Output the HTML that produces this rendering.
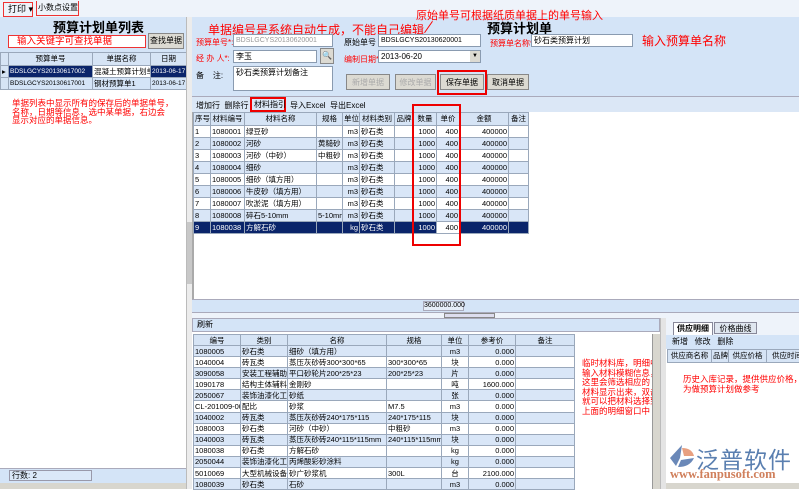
<!DOCTYPE html><html><head><meta charset="utf-8"><style>
*{margin:0;padding:0;box-sizing:border-box}
body{width:799px;height:489px;overflow:hidden;background:#fff;font-family:"Liberation Sans","Noto Sans CJK SC",sans-serif;font-size:9px;color:#000;position:relative}
.a{position:absolute;white-space:nowrap}
.red{color:#f00}
.inp{position:absolute;background:#fff;border:1px solid #8a9bb0;font-size:8px;line-height:11px;padding-left:2px;white-space:nowrap;overflow:hidden}
.btn{position:absolute;background:#dcdad2;border:1px solid #888;font-size:8px;text-align:center;line-height:15px}
table{border-collapse:collapse;position:absolute;table-layout:fixed}
td{border:1px solid #9aa8bb;font-size:7.5px;height:12px;padding:0 1px;white-space:nowrap;overflow:hidden;line-height:10px}
tr.h td{background:#d6e4f5;text-align:center;height:13px}
tr.b td{background:#d9e6f7}
tr.s td{background:#0a246a;color:#fff}
.sm td{height:11.1px;line-height:9px}
.sm tr.h td{height:11px}
.r{text-align:right}.c{text-align:center}
</style></head><body>
<div class="a" style="left:0;top:0;width:799px;height:17px;background:#eef3fa"></div>
<div class="a" style="left:3px;top:2px;width:30px;height:15px;border:1px solid #e33;font-size:9px;line-height:13px;padding-left:4px">打印 ▾</div>
<div class="a" style="left:36px;top:1px;width:43px;height:15px;border:1px solid #e33;border-top:none;font-size:8px;line-height:13px;padding-left:1px">小数点设置</div>
<div class="a" style="left:0;top:17px;width:186px;height:73px;background:#d4e4f7"></div>
<div class="a" style="left:53px;top:17px;font-size:13px;font-weight:bold">预算计划单列表</div>
<div class="inp" style="left:8px;top:35px;width:138px;height:13px;border:1px solid #e33;color:#f00;font-size:9.5px;padding-left:8px">输入关键字可查找单据</div>
<div class="btn" style="left:148px;top:33px;width:36px;height:16px;line-height:14px">查找单据</div>
<table style="left:0;top:52px;width:186px">
<col style="width:8px"><col style="width:84px"><col style="width:58px"><col style="width:36px">
<tr class="h"><td></td><td>预算单号</td><td>单据名称</td><td>日期</td></tr>
<tr class="s"><td style="background:#d6e4f5;color:#000">▸</td><td style="font-size:6.5px">BDSLGCYS20130617002</td><td style="background:#fff;color:#000">混凝土预算计划单</td><td style="font-size:6.5px">2013-06-17</td></tr>
<tr><td style="background:#d6e4f5"></td><td style="font-size:6.5px">BDSLGCYS20130617001</td><td>钢材预算单1</td><td style="font-size:6.5px">2013-06-17</td></tr>
</table>
<div class="a red" style="left:12px;top:99px;font-size:8.5px;line-height:8.5px">单据列表中显示所有的保存后的单据单号，<br>名称，日期等信息，选中某单据，右边会<br>显示对应的单据信息。</div>
<div class="a" style="left:0;top:468px;width:186px;height:15px;background:#d4e4f7;border-top:1px solid #aab"></div>
<div class="a" style="left:9px;top:470px;width:83px;height:11px;background:#dbe8f8;border:1px solid #99a;font-size:8px;line-height:9px;padding-left:2px">行数: 2</div>
<div class="a" style="left:0;top:483px;width:186px;height:6px;background:#d8d6ce"></div>
<div class="a" style="left:186px;top:17px;width:6px;height:472px;background:#ececec;border-left:1px solid #bbb"></div>
<div class="a" style="left:187px;top:222px;width:5px;height:62px;background:#c8c8c8"></div>
<div class="a" style="left:192px;top:17px;width:607px;height:79px;background:#d4e4f7"></div>
<div class="a red" style="left:208px;top:21px;font-size:12px">单据编号是系统自动生成，不能自己编辑</div>
<div class="a red" style="left:416px;top:7px;font-size:11px">原始单号可根据纸质单据上的单号输入</div>
<div class="a" style="left:428px;top:20px;width:1px;height:14px;background:#f00;transform:rotate(35deg)"></div>
<div class="a" style="left:487px;top:18px;font-size:13px;font-weight:bold">预算计划单</div>
<div class="a red" style="left:196px;top:37px;font-size:8px">预算单号*:</div>
<div class="inp" style="left:233px;top:34px;width:100px;height:13px;color:#999;font-size:7px">BDSLGCYS20130620001</div>
<div class="a" style="left:344px;top:37px;font-size:8px">原始单号 :</div>
<div class="inp" style="left:378px;top:34px;width:103px;height:13px;font-size:7px">BDSLGCYS20130620001</div>
<div class="a red" style="left:490px;top:38px;font-size:8px">预算单名称*:</div>
<div class="inp" style="left:531px;top:34px;width:102px;height:13px">砂石类预算计划</div>
<div class="a red" style="left:642px;top:32px;font-size:12px">输入预算单名称</div>
<div class="a red" style="left:196px;top:53px;font-size:8px">经 办 人*:</div>
<div class="inp" style="left:233px;top:50px;width:84px;height:13px">李玉</div>
<div class="btn" style="left:320px;top:48px;width:14px;height:16px;color:#369;line-height:14px">🔍</div>
<div class="a red" style="left:344px;top:54px;font-size:8px">编制日期*:</div>
<div class="inp" style="left:378px;top:50px;width:103px;height:13px">2013-06-20</div>
<div class="a" style="left:470px;top:51px;width:10px;height:11px;background:#dcdad2;font-size:6px;text-align:center;line-height:11px">▼</div>
<div class="a" style="left:196px;top:70px;font-size:8px">备&nbsp;&nbsp;&nbsp;&nbsp;注:</div>
<div class="inp" style="left:233px;top:66px;width:100px;height:25px">砂石类预算计划备注</div>
<div class="btn" style="left:346px;top:74px;width:44px;height:16px;color:#aaa">新增单据</div>
<div class="btn" style="left:395px;top:74px;width:41px;height:16px;color:#aaa">修改单据</div>
<div class="a" style="left:437px;top:70px;width:50px;height:25px;border:2px solid #e00"></div>
<div class="btn" style="left:440px;top:74px;width:44px;height:16px">保存单据</div>
<div class="btn" style="left:487px;top:74px;width:42px;height:16px">取消单据</div>
<div class="a" style="left:192px;top:96px;width:607px;height:16px;background:#dbe7f6;border-top:1px solid #aab"></div>
<div class="a" style="left:196px;top:100px;font-size:8px">增加行&nbsp;&nbsp;删除行</div>
<div class="a" style="left:250px;top:97px;width:36px;height:15px;border:2px solid #e00;font-size:8px;line-height:11px;padding-left:2px">材料指引</div>
<div class="a" style="left:290px;top:100px;font-size:8px">导入Excel&nbsp;&nbsp;导出Excel</div>
<div class="a" style="left:192px;top:112px;width:607px;height:188px;background:#fff;border-left:2px solid #aaa"></div>
<table style="left:193px;top:112px;width:335px">
<col style="width:17px"><col style="width:34px"><col style="width:72px"><col style="width:26px"><col style="width:17px"><col style="width:35px"><col style="width:19px"><col style="width:23px"><col style="width:23px"><col style="width:49px"><col style="width:20px">
<tr class="h"><td>序号</td><td>材料编号</td><td>材料名称</td><td>规格</td><td>单位</td><td>材料类别</td><td>品牌</td><td>数量</td><td>单价</td><td>金额</td><td>备注</td></tr>
<tr><td>1</td><td>1080001</td><td>绿豆砂</td><td></td><td class="r">m3</td><td>砂石类</td><td></td><td class="r">1000</td><td class="r">400</td><td class="r">400000</td><td></td></tr>
<tr class="b"><td>2</td><td>1080002</td><td>河砂</td><td>黄糙砂</td><td class="r">m3</td><td>砂石类</td><td></td><td class="r">1000</td><td class="r">400</td><td class="r">400000</td><td></td></tr>
<tr><td>3</td><td>1080003</td><td>河砂（中砂）</td><td>中粗砂</td><td class="r">m3</td><td>砂石类</td><td></td><td class="r">1000</td><td class="r">400</td><td class="r">400000</td><td></td></tr>
<tr class="b"><td>4</td><td>1080004</td><td>细砂</td><td></td><td class="r">m3</td><td>砂石类</td><td></td><td class="r">1000</td><td class="r">400</td><td class="r">400000</td><td></td></tr>
<tr><td>5</td><td>1080005</td><td>细砂（填方用）</td><td></td><td class="r">m3</td><td>砂石类</td><td></td><td class="r">1000</td><td class="r">400</td><td class="r">400000</td><td></td></tr>
<tr class="b"><td>6</td><td>1080006</td><td>牛皮砂（填方用）</td><td></td><td class="r">m3</td><td>砂石类</td><td></td><td class="r">1000</td><td class="r">400</td><td class="r">400000</td><td></td></tr>
<tr><td>7</td><td>1080007</td><td>吹淤泥（填方用）</td><td></td><td class="r">m3</td><td>砂石类</td><td></td><td class="r">1000</td><td class="r">400</td><td class="r">400000</td><td></td></tr>
<tr class="b"><td>8</td><td>1080008</td><td>碎石5-10mm</td><td>5-10mm</td><td class="r">m3</td><td>砂石类</td><td></td><td class="r">1000</td><td class="r">400</td><td class="r">400000</td><td></td></tr>
<tr class="s"><td>9</td><td>1080038</td><td>方解石砂</td><td></td><td class="r">kg</td><td>砂石类</td><td></td><td class="r">1000</td><td class="r" style="background:#fff;color:#000">400</td><td class="r">400000</td><td></td></tr>
</table>
<div class="a" style="left:412px;top:104px;width:49px;height:142px;border:2px solid #e00"></div>
<div class="a" style="left:192px;top:299px;width:607px;height:14px;background:#d4e4f7;border-top:1px solid #aab;border-bottom:1px solid #aab"></div>
<div class="a" style="left:423px;top:301px;width:41px;height:10px;background:#e6eef8;border:1px solid #aab;font-size:7px;text-align:center;line-height:8px">3600000.000</div>
<div class="a" style="left:192px;top:313px;width:607px;height:5px;background:#eef3fa"></div>
<div class="a" style="left:444px;top:313px;width:51px;height:5px;border:1px solid #888;background:#dde"></div>
<div class="a" style="left:192px;top:318px;width:468px;height:14px;background:#d4e4f7;border:1px solid #aab;font-size:8px;line-height:12px;padding-left:4px">刷新</div>
<div class="a" style="left:192px;top:332px;width:468px;height:157px;background:#fff"></div>
<table class="sm" style="left:193px;top:334px;width:381px">
<col style="width:47px"><col style="width:47px"><col style="width:99px"><col style="width:55px"><col style="width:27px"><col style="width:47px"><col style="width:59px">
<tr class="h"><td>编号</td><td>类别</td><td>名称</td><td>规格</td><td>单位</td><td>参考价</td><td>备注</td></tr>
<tr class="b"><td>1080005</td><td>砂石类</td><td>细砂（填方用）</td><td></td><td class="c">m3</td><td class="r">0.000</td><td></td></tr>
<tr><td>1040004</td><td>砖瓦类</td><td>蒸压灰砂砖300*300*65</td><td>300*300*65</td><td class="c">块</td><td class="r">0.000</td><td></td></tr>
<tr class="b"><td>3090058</td><td>安装工程辅助材</td><td>平口砂轮片200*25*23</td><td>200*25*23</td><td class="c">片</td><td class="r">0.000</td><td></td></tr>
<tr><td>1090178</td><td>结构主体辅料类</td><td>金刚砂</td><td></td><td class="c">吨</td><td class="r">1600.000</td><td></td></tr>
<tr class="b"><td>2050067</td><td>装饰油漆化工类</td><td>砂纸</td><td></td><td class="c">张</td><td class="r">0.000</td><td></td></tr>
<tr><td>CL-201009-0000</td><td>配比</td><td>砂浆</td><td>M7.5</td><td class="c">m3</td><td class="r">0.000</td><td></td></tr>
<tr class="b"><td>1040002</td><td>砖瓦类</td><td>蒸压灰砂砖240*175*115</td><td>240*175*115</td><td class="c">块</td><td class="r">0.000</td><td></td></tr>
<tr><td>1080003</td><td>砂石类</td><td>河砂（中砂）</td><td>中粗砂</td><td class="c">m3</td><td class="r">0.000</td><td></td></tr>
<tr class="b"><td>1040003</td><td>砖瓦类</td><td>蒸压灰砂砖240*115*115mm</td><td>240*115*115mm</td><td class="c">块</td><td class="r">0.000</td><td></td></tr>
<tr><td>1080038</td><td>砂石类</td><td>方解石砂</td><td></td><td class="c">kg</td><td class="r">0.000</td><td></td></tr>
<tr class="b"><td>2050044</td><td>装饰油漆化工类</td><td>丙烯酸彩砂涂料</td><td></td><td class="c">kg</td><td class="r">0.000</td><td></td></tr>
<tr><td>5010069</td><td>大型机械设备类</td><td>砂广砂浆机</td><td>300L</td><td class="c">台</td><td class="r">2100.000</td><td></td></tr>
<tr class="b"><td>1080039</td><td>砂石类</td><td>石砂</td><td></td><td class="c">m3</td><td class="r">0.000</td><td></td></tr>
</table>
<div class="a red" style="left:582px;top:359px;font-size:8.5px;line-height:9.5px">临时材料库，明细中<br>输入材料模糊信息，<br>这里会筛选相应的<br>材料显示出来，双击<br>就可以把材料选择到<br>上面的明细窗口中</div>
<div class="a" style="left:652px;top:334px;width:8px;height:155px;background:#d8d6ce;border-left:1px solid #999"></div>
<div class="a" style="left:660px;top:318px;width:6px;height:171px;background:#e4e4e4;border-left:1px solid #bbb"></div>
<div class="a" style="left:666px;top:318px;width:133px;height:17px;background:#eef3fa"></div>
<div class="a" style="left:673px;top:322px;width:40px;height:13px;background:#fff;border:1px solid #889;border-bottom:none;font-size:8px;font-weight:bold;text-align:center;line-height:12px">供应明细</div>
<div class="a" style="left:714px;top:322px;width:43px;height:12px;background:#dfe6ef;border:1px solid #889;font-size:8px;text-align:center;line-height:11px">价格曲线</div>
<div class="a" style="left:666px;top:335px;width:133px;height:14px;background:#d4e4f7;font-size:8px;line-height:13px;padding-left:6px">新增&nbsp;&nbsp;&nbsp;修改&nbsp;&nbsp;&nbsp;删除</div>
<table style="left:667px;top:349px;width:140px">
<col style="width:44px"><col style="width:17px"><col style="width:38px"><col style="width:41px">
<tr class="h"><td>供应商名称</td><td>品牌</td><td>供应价格</td><td>供应时间</td></tr></table>
<div class="a red" style="left:683px;top:375px;font-size:8.5px;line-height:9.5px">历史入库记录，提供供应价格，供<br>为做预算计划做参考</div>
<svg class="a" style="left:668px;top:444px" width="28" height="24" viewBox="0 0 28 24"><path d="M14 1 L2 14 L8 22 L12 14 Z" fill="#6a88b8"/><path d="M14 4 Q24 4 26 12 L16 12 Z" fill="#e8a080"/><path d="M13 16 L26 14 Q22 23 10 23 Z" fill="#6a88b8"/></svg>
<div class="a" style="left:696px;top:441px;font-size:23px;color:#5a7fb0;letter-spacing:1px">泛普软件</div>
<div class="a" style="left:670px;top:467px;font-size:12.5px;color:#d0805c;font-family:'Liberation Serif',serif;font-weight:bold">www.fanpusoft.com</div>
<div class="a" style="left:666px;top:483px;width:133px;height:6px;background:#d8d6ce"></div>
</body></html>
